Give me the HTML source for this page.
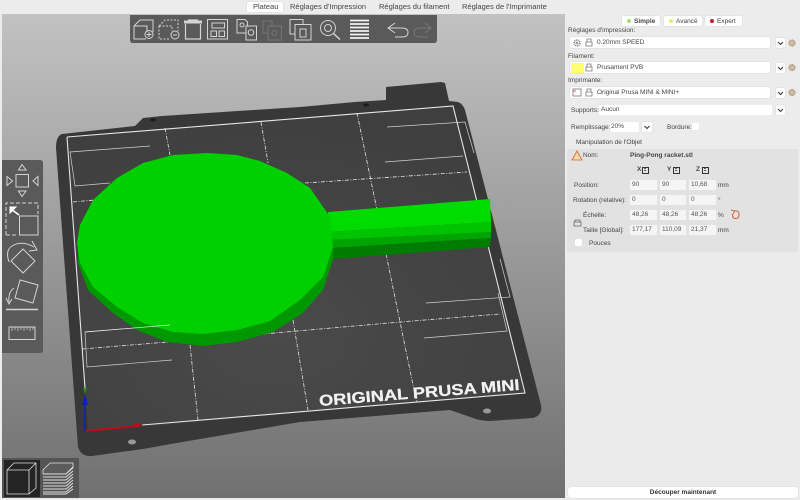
<!DOCTYPE html>
<html><head><meta charset="utf-8"><style>
html,body{margin:0;padding:0;background:#ececec}
body{width:800px;height:500px;overflow:hidden;position:relative;font-family:"Liberation Sans",sans-serif;color:#444}
.t{position:absolute;font-size:6.5px;line-height:9px;white-space:nowrap;color:#444}
.b{position:absolute;background:#fff;border-radius:2px;box-shadow:0 0 1px #bbb}
.i{position:absolute;background:#f5f5f5;height:10px;font-size:6.5px;line-height:10px;color:#555;padding-left:2px;box-sizing:border-box}
.x{position:absolute;width:5px;height:5px;border:1px solid #333;top:167px}
svg{position:absolute;left:0;top:0}
</style></head><body>
<svg width="800" height="500" viewBox="0 0 800 500">
<defs>
<linearGradient id="bg" x1="0" y1="0" x2="0" y2="1"><stop offset="0" stop-color="#c2c2c2"/><stop offset="1" stop-color="#707070"/></linearGradient>
<radialGradient id="bd" cx=".45" cy=".7" r=".7"><stop offset="0" stop-color="#4a4a4a"/><stop offset="1" stop-color="#3f3f3f"/></radialGradient>
</defs>
<rect x="2" y="14" width="563" height="484" fill="url(#bg)"/>
<!-- bed -->
<path d="M62 134L135 126 143 118 162 116 300 107 355 102 386 100 386 87 441 82 445 83 449 101 458 102Q463 104 465 110L541 405Q543 415 533 418L490 421Q483 421 476 419L450 410 300 422 165 445 143 449 92 456Q81 457 78 447L56 148Q56 136 62 134Z" fill="#383838"/>
<path d="M67 137L453 106 525 393 88 431Z" fill="url(#bd)"/>
<ellipse cx="153" cy="120" rx="3" ry="1.5" fill="#1c1c1c"/><ellipse cx="366" cy="105" rx="3" ry="1.5" fill="#1c1c1c"/>
<ellipse cx="132" cy="442" rx="4" ry="2.5" fill="#999"/><ellipse cx="487" cy="411" rx="4" ry="2.5" fill="#999"/>
<g fill="none" stroke="#e6e6e6">
<path d="M67 137L453 106 525 393 142 425" stroke-width="1.1"/>
<path d="M67 137L85 388" stroke-width="1.1"/>
<g stroke-width=".7" stroke="#d0d0d0">
<path d="M150 146L70 152 75 186 110 183"/><path d="M387 127L465 122 474 153"/><path d="M385 162L463 156"/>
<path d="M426 303L510 297 500 259"/><path d="M424 338L507 331 498 293"/><path d="M170 325L85 332 87 367 172 360"/>
</g>
<g stroke-width=".8" stroke-dasharray="4 1.5 1 1.5">
<path d="M165 128L170 155"/><path d="M261 122L268 163"/><path d="M357 113L413 385 417 402"/>
<path d="M190 345L198 420"/><path d="M293 320L308 410"/><path d="M305 183L467 172"/><path d="M73 202L95 200"/><path d="M82 349L168 342"/><path d="M263 334L400 322 500 314"/>
</g></g>
<!-- handle -->
<path d="M328 212L490 199 491 222 328 232Z" fill="#00dc00"/>
<path d="M328 232L491 222 491 232 330 240Z" fill="#00c400"/>
<path d="M330 240L491 232 491 238 332 248Z" fill="#00a400"/>
<path d="M332 248L491 238 490 247 333 259Z" fill="#007c00"/>
<!-- head -->
<path d="M78 263L88 290 113 313 137 330 167 342 203 346 237 342 273 332 303 313 323 290 333 260 333 240 78 240Z" fill="#009800"/>
<path d="M207 153L173 155 143 163 117 178 93 200 80 225 77 243 80 263 93 287 117 307 143 323 173 332 203 334 237 330 270 321 300 300 323 277 333 247 330 217 310 188 287 173 260 161 237 155Z" fill="#00d000"/>
<path d="M85 332L170 325" stroke="#e8e8e8" stroke-width=".7" fill="none"/>
<!-- axes -->
<path d="M85 432L85 400" stroke="#0f1fc0" stroke-width="1.6"/><path d="M85 394L82 405 88 405Z" fill="#0f1fc0"/><path d="M85 394L83 388 87 388Z" fill="#2a8a20"/>
<path d="M86 431L136 426" stroke="#c00d18" stroke-width="2"/><path d="M143 425L134 423 135 428Z" fill="#c00d18"/>
<text transform="translate(319.500 406) rotate(-4.600)" font-family="Liberation Sans" font-weight="700" font-size="15.500" fill="#f2f2f2" stroke="#f2f2f2" stroke-width=".25" textLength="201" lengthAdjust="spacingAndGlyphs">ORIGINAL PRUSA MINI</text>
<!-- top toolbar -->
<path d="M130 15H437V40Q437 43 434 43H133Q130 43 130 40Z" fill="#5a5a5a"/>
<g fill="none" stroke="#d4d4d4" stroke-width="1">
<path d="M134 26L140 20H153V32M134 26V39H146M134 26H147V32"/><circle cx="149" cy="34.500" r="4"/><path d="M146.500 34.500H151.500M149 32V37"/>
<path d="M159 26L165 20H178V31M159 26V39H170M159 26H172V31" stroke-dasharray="2 1.500"/><circle cx="175" cy="35" r="4"/><path d="M173 35H177"/>
<path d="M184 22H202" stroke-width="3"/><path d="M188 20H198M185.500 24V39H200.500V24" stroke-width="1.200"/>
<rect x="207.500" y="19.500" width="20" height="19.500"/><rect x="212" y="23" width="12.500" height="5"/><rect x="211" y="31" width="5.500" height="5.500"/><rect x="219" y="31" width="5.500" height="5.500"/>
<path d="M237 19.500H245L247.500 22V33H237Z"/><circle cx="242" cy="25" r="2"/><rect x="246" y="26" width="10.500" height="14" fill="#5a5a5a"/><circle cx="251" cy="32.500" r="2.800"/>
<g stroke="#767676"><path d="M263 21H272V33H263Z"/><rect x="268" y="26" width="13.500" height="14" fill="#5a5a5a"/><circle cx="274.500" cy="33" r="2.500"/></g>
<rect x="290" y="19.500" width="13" height="14.500"/><rect x="295" y="24.500" width="16" height="15.500" fill="#5a5a5a"/><rect x="300" y="29" width="6" height="8"/>
<circle cx="328" cy="28" r="7.500"/><circle cx="328" cy="28" r="3.500"/><path d="M333.500 33.500L340 39.500" stroke-width="1.500"/>
<path d="M350 20.500H369M350 24H369M350 27.500H369M350 31H369M350 34.500H369M350 38H369" stroke="#f2f2f2" stroke-width="1.800"/>
<path d="M395 23L388 28 395 33M388 28H402Q408 28 408 32.500 408 37 402 37H395"/>
<path d="M425 23L431 28 425 33M431 28H420Q414 28 414 32.500 414 37 420 37H428" stroke="#767676"/>
</g>
<!-- left toolbar -->
<path d="M2 160H40Q43 160 43 163V350Q43 353 40 353H2Z" fill="#5a5a5a"/>
<g fill="none" stroke="#d4d4d4" stroke-width="1">
<rect x="16" y="174.500" width="12.500" height="12.500"/><path d="M22 164.500L18.500 170H26ZM22 196.500L18.500 191H26ZM12.500 181L7 176.500V185.500ZM33 181L38 176.500V185.500Z"/>
<path d="M6 235V203H38V214M6 235H17" stroke-dasharray="4 2"/><rect x="19.500" y="216" width="18.500" height="19"/>
<path d="M11 209L19 215" stroke="#fff" stroke-width="1.500"/><path d="M10 207H16L10 213Z" fill="#fff" stroke="#fff"/>
<path d="M23 249L35 261 23 273 11 261Z"/><path d="M9 262Q5 250 12 246 22 240 34 247M32 241L37 250 29 251"/>
<path d="M20 280L38 285 33 303 15 298Z"/><path d="M6 309.500H38" stroke-width="1.500"/><path d="M14 288Q8 292 9 302M6 298L9 304 12 299"/>
<rect x="9" y="327" width="26" height="12.500"/><path d="M12 327V331M15 327V330M18 327V331M21 327V330M24 327V331M27 327V330M30 327V331M33 327V330" stroke-width=".7"/>
</g>
<!-- bottom left -->
<rect x="2" y="458" width="77" height="40" fill="#555"/>
<rect x="4" y="460" width="36" height="37" fill="#242424"/>
<g fill="none" stroke="#e0e0e0" stroke-width=".8">
<path d="M7 470L14 463H36V488L29 494H7ZM7 470H29V494M29 470L36 463"/>
<path d="M43 470L50 463H73V468L66 474H43Z" fill="#5c5c5c"/>
<path d="M43 474H66M43 477H66M43 480H66M43 483H66M43 486H66M43 489H66M43 492H66M43 494H66M66 474L73 467M66 477L73 471M66 480L73 474M66 483L73 477M66 486L73 480M66 489L73 483M66 492L73 486M66 494L73 489" stroke-width="1"/>
</g>
<!-- panel -->
<rect x="565" y="14" width="235" height="486" fill="#ececec"/>
<rect x="567" y="149" width="231" height="103" rx="2" fill="#e2e2e2"/>
<rect x="567" y="252" width="231" height="233" fill="#ebebeb"/>
<rect x="0" y="0" width="800" height="14" fill="#ececec"/>
</svg>
<div class="b" style="left:247px;top:2px;width:36px;height:10px"></div>
<div class="t" style="left:253px;top:2px;font-size:7.500px;line-height:10px">Plateau</div>
<div class="t" style="left:290px;top:2px;font-size:7.500px;line-height:10px">Réglages d'Impression</div>
<div class="t" style="left:379px;top:2px;font-size:7.500px;line-height:10px">Réglages du filament</div>
<div class="t" style="left:462px;top:2px;font-size:7.500px;line-height:10px">Réglages de l'Imprimante</div>

<div class="b" style="left:622px;top:16px;width:38px;height:10px"></div>
<div class="b" style="left:664px;top:16px;width:38px;height:10px"></div>
<div class="b" style="left:705px;top:16px;width:37px;height:10px"></div>
<div style="position:absolute;left:627px;top:19px;width:4px;height:4px;border-radius:50%;background:#9fe06a"></div>
<div style="position:absolute;left:669px;top:19px;width:4px;height:4px;border-radius:50%;background:#f0ea60"></div>
<div style="position:absolute;left:710px;top:19px;width:4px;height:4px;border-radius:50%;background:#c81e30"></div>
<div class="t" style="left:634px;top:17px;font-weight:700">Simple</div>
<div class="t" style="left:676px;top:17px">Avancé</div>
<div class="t" style="left:717px;top:17px">Expert</div>

<div class="t" style="left:568px;top:26px">Réglages d'impression:</div>
<div class="b" style="left:570px;top:37px;width:200px;height:11px"></div>
<div class="t" style="left:597px;top:38px">0.20mm SPEED</div>
<div class="t" style="left:568px;top:52px">Filament:</div>
<div class="b" style="left:570px;top:62px;width:200px;height:11px"></div>
<div style="position:absolute;left:571px;top:63px;width:13px;height:10px;background:#ffff6e"></div>
<div class="t" style="left:597px;top:63px">Prusament PVB</div>
<div class="t" style="left:568px;top:76px">Imprimante:</div>
<div class="b" style="left:570px;top:87px;width:200px;height:11px"></div>
<div class="t" style="left:597px;top:88px">Original Prusa MINI &amp; MINI+</div>

<div class="b" style="left:776px;top:38px;width:9px;height:10px"></div>
<div class="b" style="left:776px;top:63px;width:9px;height:10px"></div>
<div class="b" style="left:776px;top:88px;width:9px;height:10px"></div>
<div class="b" style="left:776px;top:105px;width:9px;height:10px"></div>
<div class="b" style="left:642px;top:122px;width:10px;height:10px"></div>

<div class="t" style="left:571px;top:106px">Supports:</div>
<div class="b" style="left:599px;top:105px;width:173px;height:10px;box-shadow:none"></div>
<div class="t" style="left:601px;top:105px">Aucun</div>
<div class="t" style="left:571px;top:123px">Remplissage:</div>
<div class="b" style="left:610px;top:122px;width:29px;height:10px;box-shadow:none"></div>
<div class="t" style="left:611px;top:122px">20%</div>
<div class="t" style="left:667px;top:123px">Bordure:</div>
<div class="b" style="left:692px;top:123px;width:7px;height:7px;box-shadow:none"></div>

<div class="t" style="left:576px;top:138px">Manipulation de l'Objet</div>
<div class="t" style="left:583px;top:151px">Nom:</div>
<div class="t" style="left:630px;top:151px;font-weight:700">Ping-Pong racket.stl</div>
<div class="t" style="left:637px;top:165px;font-weight:700">X</div>
<div class="t" style="left:667px;top:165px;font-weight:700">Y</div>
<div class="t" style="left:696px;top:165px;font-weight:700">Z</div>
<div class="x" style="left:642px"></div>
<div class="x" style="left:673px"></div>
<div class="x" style="left:702px"></div>

<div class="t" style="left:574px;top:181px">Position:</div>
<div class="i" style="left:630px;top:180px;width:27px">90</div><div class="i" style="left:660px;top:180px;width:26px">90</div><div class="i" style="left:689px;top:180px;width:27px">10,68</div>
<div class="t" style="left:718px;top:181px">mm</div>
<div class="t" style="left:573px;top:196px">Rotation (relative):</div>
<div class="i" style="left:630px;top:195px;width:27px">0</div><div class="i" style="left:660px;top:195px;width:26px">0</div><div class="i" style="left:689px;top:195px;width:27px">0</div>
<div class="t" style="left:718px;top:196px">°</div>
<div class="t" style="left:583px;top:211px">Échelle:</div>
<div class="i" style="left:630px;top:210px;width:27px">48,26</div><div class="i" style="left:660px;top:210px;width:26px">48,26</div><div class="i" style="left:689px;top:210px;width:27px">48,26</div>
<div class="t" style="left:718px;top:211px">%</div>
<div class="t" style="left:583px;top:226px">Taille [Global]:</div>
<div class="i" style="left:630px;top:225px;width:27px">177,17</div><div class="i" style="left:660px;top:225px;width:26px">110,09</div><div class="i" style="left:689px;top:225px;width:27px">21,37</div>
<div class="t" style="left:718px;top:226px">mm</div>
<div class="b" style="left:575px;top:239px;width:7px;height:7px;box-shadow:none"></div>
<div class="t" style="left:589px;top:239px">Pouces</div>

<div class="b" style="left:568px;top:487px;width:230px;height:11px;border-radius:3px"></div>
<div class="t" style="left:568px;top:488px;width:230px;text-align:center;font-weight:700;color:#333">Découper maintenant</div>

<svg width="800" height="500" viewBox="0 0 800 500"><g fill="none" stroke="#777" stroke-width=".8">
<circle cx="577" cy="43" r="3" stroke-width="1.200" stroke-dasharray="1.200 .6"/><circle cx="577" cy="43" r="1"/>
<path d="M587 42V39H591V42M586 42H592V46H586Z"/><path d="M587 67V64H591V67M586 67H592V71H586Z"/><path d="M587 92V89H591V92M586 92H592V96H586Z"/>
<rect x="573" y="89" width="8" height="7"/><path d="M573 91H576" stroke="#b36"/>
<path d="M778 42L780.500 44.500 783 42M778 67L780.500 69.500 783 67M778 92L780.500 94.500 783 92M778 109L780.500 111.500 783 109M644.500 126L647 128.500 649.500 126" stroke="#333" stroke-width="1"/>
<g fill="#c9bba8" stroke="#b09a7a" stroke-width="1.200" stroke-dasharray="1.200 .5"><circle cx="792" cy="43" r="3"/><circle cx="792" cy="67.500" r="3"/><circle cx="792" cy="92.500" r="3"/></g>
<path d="M575 222V220H580V222M574 222H581V226H574Z" stroke="#666"/>
<path d="M734 211Q739 210 739 214.500 739 219 735 218.500 732 218 732.500 214M731 210L735 211 733 214" stroke="#d8623a" stroke-width="1"/>
<path d="M577 151L582 160H572Z" stroke="#d8623a" fill="#f2d9a8"/>
<path d="M644 168.500H646M644 170.500H646M675 168.500H677M675 170.500H677M704 168.500H706M704 170.500H706" stroke="#333"/>
</g></svg>
</body></html>
